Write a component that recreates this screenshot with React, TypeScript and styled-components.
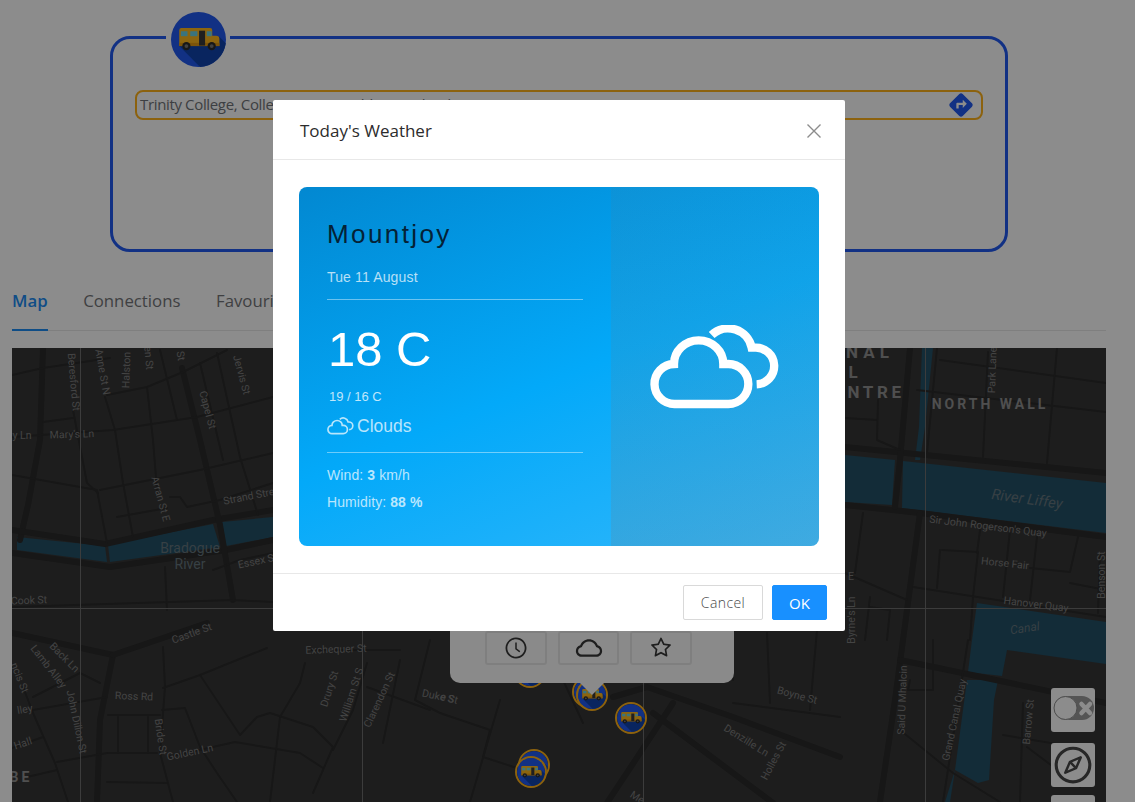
import React from 'react';
import styled, { createGlobalStyle } from 'styled-components';
import { MdDirections } from 'react-icons/md';
import { AiOutlineClockCircle, AiOutlineCloud, AiOutlineStar, AiOutlineCompass } from 'react-icons/ai';

const GlobalStyle = createGlobalStyle`
  html, body { margin: 0; padding: 0; height: 100%; overflow: hidden; background: #fff; }
  body { font-family: "Open Sans", "Liberation Sans", sans-serif; }
  * { box-sizing: border-box; }
`;

const Page = styled.div`
  padding: 36px 29px 0 12px;
  height: 802px;
  overflow: hidden;
`;

const SearchCard = styled.section`
  position: relative;
  width: 898px;
  height: 216px;
  margin: 0 auto;
  padding: 51px 22px 0;
  border: 3px solid #2159f0;
  border-radius: 20px;
`;

const BadgeSlot = styled.div`
  position: absolute;
  left: 53px;
  top: -27px;
  width: 64px;
  padding: 0 4px 0 5px;
  background: linear-gradient(#fff 0 27px, transparent 27px);
`;

const BadgeIcon = styled.svg`
  display: block;
  width: 55px;
  height: 55px;
`;

const AddressField = styled.div`
  display: flex;
  align-items: center;
  justify-content: space-between;
  height: 30px;
  padding: 0 6px 2px 3px;
  border: 2px solid #ffb21a;
  border-radius: 8px;
  color: #6f7378;
  font-size: 15px;
  letter-spacing: -0.35px;
  white-space: nowrap;
`;

const RouteIcon = styled(MdDirections)`
  color: #2159f0;
  font-size: 28px;
  margin-bottom: -2px;
`;

const TabBar = styled.nav`
  display: flex;
  gap: 35.5px;
  height: 52px;
  margin-top: 27px;
  border-bottom: 1px solid #e8e8e8;
`;

const Tab = styled.div<{ $active?: boolean }>`
  height: 52px;
  padding-top: 9px;
  font-size: 16.8px;
  line-height: 26px;
  font-weight: ${p => (p.$active ? 600 : 400)};
  color: ${p => (p.$active ? '#1c8cf5' : '#747578')};
  border-bottom: 2px solid ${p => (p.$active ? '#1c8cf5' : 'transparent')};
`;

const MapFrame = styled.div`
  position: relative;
  height: 470px;
  margin-top: 17px;
  overflow: hidden;
  background: #363636;
`;

const MapDrawing = styled.svg`
  display: block;
  width: 1094px;
  height: 470px;
`;

const MapLabel = styled.text<{ $size: number; $weight: number; $spacing: number; $italic?: boolean; $onWater: boolean }>`
  font-family: Roboto, "Liberation Sans", sans-serif;
  font-size: ${p => p.$size}px;
  font-weight: ${p => p.$weight};
  font-style: ${p => (p.$italic ? 'italic' : 'normal')};
  letter-spacing: ${p => p.$spacing}px;
  fill: ${p => (p.$onWater ? '#64757d' : p.$weight > 500 ? '#909090' : '#7c7c7c')};
  text-anchor: middle;
  dominant-baseline: middle;
`;

const Marker = styled.svg<{ $x: number; $y: number }>`
  position: absolute;
  left: ${p => p.$x - 16 - 12}px;
  top: ${p => p.$y - 16 - 348}px;
  width: 32px;
  height: 32px;
  border: 2px solid #ffb21a;
  border-radius: 50%;
`;

const Popover = styled.div`
  position: absolute;
  left: 438px;
  top: 135px;
  width: 284px;
  height: 200px;
  padding: 0 42px 18px 35px;
  display: flex;
  align-items: flex-end;
  gap: 11px;
  border-radius: 10px;
  background: #fbfbfb;
  &::after {
    content: '';
    position: absolute;
    left: 130px;
    top: 100%;
    border-left: 12px solid transparent;
    border-right: 12px solid transparent;
    border-top: 12px solid #fbfbfb;
  }
`;

const PopoverButton = styled.div<{ $icon: number }>`
  flex: 1;
  height: 34px;
  display: flex;
  align-items: center;
  justify-content: center;
  border: 2px solid #e8e8e8;
  border-radius: 3px;
  color: #383838;
  font-size: ${p => p.$icon}px;
`;

const ControlStack = styled.div`
  position: absolute;
  left: 1039px;
  top: 340px;
  display: flex;
  flex-direction: column;
`;

const ControlButton = styled.div<{ $gap: number }>`
  width: 44px;
  height: 44px;
  margin-top: ${p => p.$gap}px;
  display: flex;
  align-items: center;
  justify-content: center;
  border-radius: 3px;
  background: #fff;
  color: #484848;
  font-size: 42px;
`;

const Mask = styled.div`
  position: fixed;
  inset: 0;
  background: rgba(0, 0, 0, 0.45);
`;

const ModalWrap = styled.div`
  position: fixed;
  inset: 0;
  display: flex;
  justify-content: center;
  align-items: flex-start;
  padding: 100px 17px 0 0;
`;

const Modal = styled.div`
  width: 572px;
  background: #fff;
  border-radius: 2px;
`;

const ModalHeader = styled.header`
  height: 60px;
  padding: 2px 23px 0 27px;
  display: flex;
  align-items: center;
  justify-content: space-between;
  border-bottom: 1px solid #e8e8e8;
`;

const ModalTitle = styled.h2`
  margin: 0;
  font-size: 17px;
  line-height: 24px;
  font-weight: 400;
  color: #2c2c2c;
`;

const CloseIcon = styled.svg`
  width: 16px;
  height: 16px;
  stroke: #8c8c8c;
  stroke-width: 1.4;
`;

const ModalBody = styled.div`
  padding: 27px 26px;
`;

const WeatherCard = styled.div`
  display: flex;
  height: 359px;
  border-radius: 8px;
  overflow: hidden;
  font-family: "Liberation Sans", Arial, sans-serif;
  background: linear-gradient(158deg, #0288d1 0%, #03a9f9 52%, #31b7fb 100%);
`;

const WeatherDetails = styled.div`
  width: 312px;
  padding: 31px 28px 0;
  color: rgba(255, 255, 255, 0.72);
`;

const City = styled.div`
  font-size: 26px;
  line-height: 32px;
  letter-spacing: 2.4px;
  color: #052236;
`;

const DateLine = styled.div`
  margin-top: 17px;
  font-size: 14px;
  line-height: 20px;
  letter-spacing: 0.15px;
`;

const Rule = styled.hr<{ $gap: number }>`
  margin: ${p => p.$gap}px 0 0;
  border: 0;
  height: 1px;
  background: rgba(255, 255, 255, 0.42);
`;

const Temperature = styled.div`
  margin: 21px 0 0 1px;
  font-size: 49px;
  line-height: 56px;
  color: #fff;
`;

const Range = styled.div`
  margin: 11px 0 0 2px;
  font-size: 13px;
  line-height: 18px;
  color: rgba(255, 255, 255, 0.75);
`;

const Condition = styled.div`
  display: flex;
  align-items: center;
  gap: 3px;
  margin-top: 8px;
  font-size: 17.5px;
  line-height: 24px;
`;

const Stat = styled.div<{ $gap: number }>`
  margin-top: ${p => p.$gap}px;
  font-size: 14px;
  line-height: 20px;
  letter-spacing: 0.1px;
  b { font-weight: 700; }
`;

const WeatherVisual = styled.div`
  flex: 1;
  display: flex;
  align-items: center;
  justify-content: center;
  background: linear-gradient(rgba(110, 110, 110, 0.09), rgba(120, 120, 120, 0.2));
`;

const CloudSvg = styled.svg<{ $w: number; $h: number; $stroke: string }>`
  width: ${p => p.$w}px;
  height: ${p => p.$h}px;
  fill: none;
  stroke: ${p => p.$stroke};
`;

const ModalFooter = styled.footer`
  height: 58px;
  padding: 11px 18px 0 0;
  display: flex;
  justify-content: flex-end;
  gap: 9px;
  border-top: 1px solid #e8e8e8;
`;

const FooterButton = styled.button<{ $primary?: boolean }>`
  width: ${p => (p.$primary ? 55 : 80)}px;
  height: 35px;
  padding: 0;
  font-family: inherit;
  font-size: ${p => (p.$primary ? 15 : 14)}px;
  font-weight: ${p => (p.$primary ? 400 : 300)};
  letter-spacing: ${p => (p.$primary ? 0 : 0.4)}px;
  border-radius: 2px;
  border: 1px solid ${p => (p.$primary ? '#1890ff' : '#d9d9d9')};
  background: ${p => (p.$primary ? '#1890ff' : '#fff')};
  color: ${p => (p.$primary ? '#fff' : '#484848')};
`;

const BusGraphic = () => (
  <>
    <circle cx="50" cy="50" r="50" fill="#2159f0" />
    <path d="M15 62 L52.9 99.9 A50 50 0 0 0 99.6 56.6 L88 45 Z" fill="#1244ae" />
    <path d="M15 33 a4 4 0 0 1 4 -4 H71 a4 4 0 0 1 4 4 V43 H82 a6 6 0 0 1 6 6 V62 H15 Z" fill="#ffb81c" />
    <rect x="15" y="56" width="73" height="6" fill="#e39a12" />
    <rect x="18" y="35" width="12" height="9" fill="#6bd3e6" />
    <rect x="35" y="35" width="13" height="9" fill="#6bd3e6" />
    <rect x="65" y="35" width="9" height="9" fill="#6bd3e6" />
    <rect x="51" y="34" width="11" height="27" fill="#3a3a3a" />
    <circle cx="28" cy="62" r="7.5" fill="#2a2a2a" />
    <circle cx="28" cy="62" r="3.5" fill="#777" />
    <circle cx="74" cy="62" r="7.5" fill="#2a2a2a" />
    <circle cx="74" cy="62" r="3.5" fill="#777" />
  </>
);

const CloudPaths = () => (
  <>
    <path d="M225 312 H385 A60 60 0 0 0 385 192 H370 A74 71 0 0 0 222 192 A60 60 0 0 0 225 312 Z" />
    <path d="M335 105 A72 72 0 0 1 455 143 H465 A50 50 0 0 1 470 253" />
  </>
);

type Pts = number[];
const P = (pts: Pts) => {
  const out: string[] = [];
  for (let i = 0; i < pts.length; i += 2) out.push(`${pts[i]},${pts[i + 1]}`);
  return out.join(' ');
};

const water: Pts[] = [
  [17, 537, 105, 546, 107, 562, 17, 550],
  [108, 545, 213, 524, 220, 547, 110, 562],
  [222, 522, 273, 517, 273, 537, 226, 546],
  [845, 455, 895, 460, 892, 505, 845, 502],
  [903, 461, 1106, 483, 1106, 533, 902, 508],
  [922, 348, 933, 348, 925, 427, 920, 460, 915, 460, 919, 427],
  [977, 603, 1106, 622, 1106, 664, 1007, 650, 1002, 676, 968, 672, 972, 640],
  [967, 680, 998, 680, 994, 700, 989, 780, 978, 783, 955, 770, 950, 802, 945, 802, 955, 770],
];

const thick: Pts[] = [
  [43, 348, 40, 440, 28, 505, 20, 540],
  [12, 530, 105, 544, 213, 520, 273, 510],
  [12, 553, 110, 567, 226, 550, 273, 540],
  [182, 368, 200, 440, 220, 525, 233, 600],
  [12, 633, 113, 655, 100, 720, 97, 802],
  [113, 655, 157, 640, 207, 623],
  [613, 697, 647, 687, 733, 717, 840, 757],
  [653, 713, 773, 803],
  [673, 703, 607, 803],
  [845, 447, 1106, 473],
  [845, 505, 920, 513, 1106, 537],
  [910, 348, 900, 460, 895, 507],
  [920, 513, 903, 640, 895, 700, 880, 802],
  [900, 660, 1106, 703],
];

const medium: Pts[] = [
  [107, 395, 147, 387, 183, 372, 227, 350],
  [105, 397, 115, 430, 123, 483, 133, 537],
  [12, 437, 113, 430, 197, 417, 273, 397],
  [147, 387, 153, 440, 157, 490],
  [160, 350, 177, 420],
  [217, 353, 240, 457, 258, 515],
  [200, 363, 223, 460],
  [100, 490, 200, 470, 273, 453],
  [12, 475, 97, 490, 107, 543],
  [73, 410, 87, 483, 98, 493],
  [43, 422, 73, 418],
  [12, 375, 43, 368, 110, 358],
  [170, 497, 180, 497, 187, 507, 220, 500, 273, 483],
  [117, 517, 167, 508],
  [165, 567, 167, 610],
  [213, 570, 240, 560, 273, 553],
  [12, 607, 233, 600, 273, 602],
  [163, 647, 165, 687, 160, 753, 173, 802],
  [80, 673, 100, 683],
  [108, 715, 160, 715],
  [107, 753, 157, 753],
  [118, 717, 118, 753],
  [148, 717, 148, 753],
  [162, 710, 185, 708, 200, 747, 217, 773, 237, 802],
  [163, 688, 200, 675, 267, 648],
  [200, 675, 240, 735, 257, 717, 270, 713, 313, 727, 333, 747, 313, 793],
  [168, 757, 235, 742, 300, 753, 323, 768],
  [280, 717, 270, 802],
  [305, 663, 300, 683, 280, 717],
  [307, 650, 400, 650],
  [367, 663, 353, 710, 333, 750],
  [367, 687, 430, 710],
  [400, 660, 383, 743],
  [23, 687, 33, 713, 55, 763, 68, 802],
  [33, 697, 80, 673],
  [33, 710, 107, 697],
  [12, 748, 43, 737],
  [57, 762, 107, 753],
  [27, 777, 57, 770],
  [107, 782, 167, 783],
  [440, 713, 490, 730, 483, 757, 523, 770],
  [563, 680, 583, 723],
  [733, 630, 733, 680],
  [733, 703, 840, 717],
  [767, 633, 770, 703],
  [817, 630, 810, 710],
  [500, 700, 470, 802],
  [430, 640, 415, 700, 440, 713],
  [937, 348, 927, 453],
  [940, 360, 1106, 383],
  [917, 390, 1106, 412],
  [988, 352, 983, 457],
  [1057, 348, 1047, 463],
  [845, 418, 877, 420],
  [878, 400, 877, 440, 900, 450],
  [942, 550, 978, 552, 973, 597, 970, 640],
  [940, 550, 937, 588],
  [980, 530, 977, 553],
  [1010, 530, 1003, 597],
  [1037, 537, 1030, 600],
  [1078, 537, 1070, 572, 1030, 568],
  [1070, 583, 1106, 590],
  [845, 573, 907, 600],
  [913, 587, 1106, 617],
  [863, 513, 855, 573],
  [870, 597, 865, 640],
  [870, 607, 890, 610, 887, 640],
  [1100, 553, 1098, 613],
  [968, 640, 943, 802],
  [1023, 703, 1020, 802],
  [910, 680, 908, 690, 933, 690, 933, 640],
  [1003, 735, 1093, 750],
  [1027, 747, 1080, 787],
  [900, 730, 953, 773, 1000, 802],
];

const gridV = [80, 362, 643, 925];

type L = [string, number, number, number, number?, number?, number?, boolean?, boolean?];
const labels: L[] = [
  ['Beresford St', 73, 382, 85],
  ['Anne St N', 102, 372, 80],
  ['Halston', 127, 370, -88],
  ['en St', 148, 358, 85],
  ['St', 180, 356, 80],
  ['Jervis St', 241, 375, 75],
  ['y Ln', 22, 436, 0],
  ["Mary's Ln", 72, 435, -2],
  ['Capel St', 207, 410, 75],
  ['Arran St E', 160, 499, 75],
  ['Strand Stre', 249, 497, -11],
  ['Bradogue', 190, 549, 0, 14, 400, 0, false, true],
  ['River', 190, 565, 0, 14, 400, 0, false, true],
  ['Essex S', 256, 562, -12],
  ['Cook St', 29, 601, -2],
  ['Castle St', 192, 634, -20],
  ['Back Ln', 64, 658, 45],
  ['Lamb Alley', 48, 667, 52],
  ['ncis St', 19, 678, 68],
  ['John Dillon St', 76, 722, 78],
  ['Ross Rd', 134, 697, 2],
  ['lley', 25, 710, -10],
  ['Hall', 23, 744, -18],
  ['Bride St', 160, 737, 82],
  ['Golden Ln', 190, 753, -12],
  ['Exchequer St', 336, 650, -2],
  ['Drury St', 330, 689, -72],
  ['William St S', 352, 695, -72],
  ['Clarendon St', 380, 700, -65],
  ['Duke S', 438, 697, 12],
  ['BE', 21, 778, 0, 14, 700, 3],
  ['e St', 449, 699, 15],
  ['Boyne St', 797, 696, 15],
  ['Denzille Ln', 746, 741, 32],
  ['Holles St', 774, 761, -62],
  ['Me', 637, 798, 32],
  ['Grand Canal Quay', 955, 720, -78],
  ['Barrow St', 1029, 722, -85],
  ['Said U Mhalcin', 903, 700, -88],
  ['NAL', 870, 354, 0, 17, 700, 5],
  ['L', 853, 374, 0, 17, 700, 0],
  ['NTRE', 876, 394, 0, 17, 700, 3.6],
  ['NORTH WALL', 990, 405, 0, 14, 700, 3],
  ['Park Lane', 993, 370, -88],
  ['River Liffey', 1027, 500, 8, 15, 400, 0, true, true],
  ["Sir John Rogerson's Quay", 988, 527, 7],
  ['Horse Fair', 1005, 564, 6],
  ['Hanover Quay', 1036, 605, 7],
  ['Benson St', 1102, 575, -90],
  ['Canal', 1025, 629, -8, 12, 400, 0, true, true],
  ['E', 851, 577, 0],
  ["Byrne's Ln", 852, 620, -90],
];

const markers: [number, number][] = [
  [530, 672],
  [588, 692],
  [592, 695],
  [631, 718],
  [534, 765],
  [531, 772],
];

export default function App() {
  return (
    <>
      <GlobalStyle />
      <Page>
        <SearchCard>
          <BadgeSlot>
            <BadgeIcon viewBox="0 0 100 100"><BusGraphic /></BadgeIcon>
          </BadgeSlot>
          <AddressField>
            <span>Trinity College, College Green, Dublin 2, Ireland</span>
            <RouteIcon />
          </AddressField>
        </SearchCard>
        <TabBar>
          <Tab $active>Map</Tab>
          <Tab>Connections</Tab>
          <Tab>Favourites</Tab>
        </TabBar>
        <MapFrame>
          <MapDrawing viewBox="12 348 1094 470" fill="none" strokeLinejoin="round" strokeLinecap="round">
            {water.map((p, i) => <polygon key={i} points={P(p)} fill="#235066" />)}
            {thick.map((p, i) => <polyline key={i} points={P(p)} stroke="#2a2a2a" strokeWidth="6" />)}
            {medium.map((p, i) => <polyline key={i} points={P(p)} stroke="#2a2a2a" strokeWidth="2" />)}
            {gridV.map(x => <line key={x} x1={x + 0.5} x2={x + 0.5} y1="348" y2="818" stroke="#6e6e6e" strokeWidth="1" />)}
            <line x1="12" x2="1106" y1="608.5" y2="608.5" stroke="#6e6e6e" strokeWidth="1" />
            {labels.map(([t, x, y, r, size = 10.5, weight = 400, spacing = 0, italic, onWater = false]) => (
              <MapLabel key={t + x} x={x} y={y} $size={size} $weight={weight} $spacing={spacing} $italic={italic} $onWater={onWater} transform={`rotate(${r} ${x} ${y})`}>
                {t}
              </MapLabel>
            ))}
          </MapDrawing>
          {markers.map(([x, y]) => (
            <Marker key={`${x}-${y}`} $x={x} $y={y} viewBox="0 0 100 100"><BusGraphic /></Marker>
          ))}
          <Popover>
            <PopoverButton $icon={24}><AiOutlineClockCircle /></PopoverButton>
            <PopoverButton $icon={30}><AiOutlineCloud /></PopoverButton>
            <PopoverButton $icon={24}><AiOutlineStar /></PopoverButton>
          </Popover>
          <ControlStack>
            <ControlButton $gap={0}>
              <svg width="44" height="44" viewBox="0 0 44 44">
                <rect x="3" y="8" width="40" height="24" rx="12" fill="#9b9b9b" />
                <circle cx="14.5" cy="20" r="11.5" fill="#fff" stroke="#8f8f8f" strokeWidth="1" />
                <path d="M30.5 16 L39 25 M39 16 L30.5 25" stroke="#fff" strokeWidth="4.5" strokeLinecap="round" />
              </svg>
            </ControlButton>
            <ControlButton $gap={11}><AiOutlineCompass /></ControlButton>
            <ControlButton $gap={8} />
          </ControlStack>
        </MapFrame>
      </Page>
      <Mask />
      <ModalWrap>
        <Modal>
          <ModalHeader>
            <ModalTitle>Today's Weather</ModalTitle>
            <CloseIcon viewBox="0 0 16 16"><path d="M1.5 1.5 L14.5 14.5 M14.5 1.5 L1.5 14.5" /></CloseIcon>
          </ModalHeader>
          <ModalBody>
            <WeatherCard>
              <WeatherDetails>
                <City>Mountjoy</City>
                <DateLine>Tue 11 August</DateLine>
                <Rule $gap={12} />
                <Temperature>18 C</Temperature>
                <Range>19 / 16 C</Range>
                <Condition>
                  <CloudSvg $w={27} $h={18} $stroke="rgba(255,255,255,.72)" strokeWidth="24" viewBox="150 75 390 252"><CloudPaths /></CloudSvg>
                  Clouds
                </Condition>
                <Rule $gap={14} />
                <Stat $gap={12}>Wind: <b>3</b> km/h</Stat>
                <Stat $gap={7}>Humidity: <b>88 %</b></Stat>
              </WeatherDetails>
              <WeatherVisual>
                <CloudSvg $w={130} $h={84} $stroke="#fff" strokeWidth="25" viewBox="150 75 390 252"><CloudPaths /></CloudSvg>
              </WeatherVisual>
            </WeatherCard>
          </ModalBody>
          <ModalFooter>
            <FooterButton>Cancel</FooterButton>
            <FooterButton $primary>OK</FooterButton>
          </ModalFooter>
        </Modal>
      </ModalWrap>
    </>
  );
}
